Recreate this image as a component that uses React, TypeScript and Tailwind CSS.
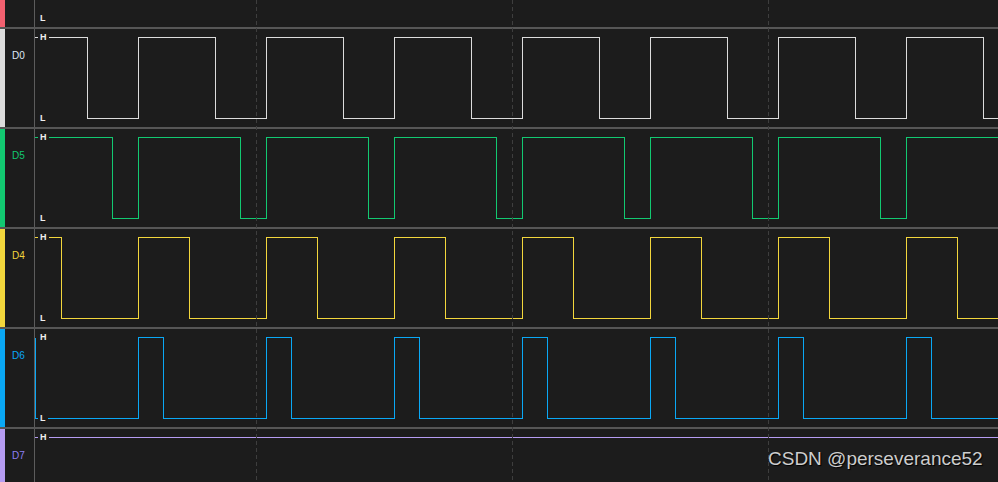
import React from "react";

const SEP = "#565656";

type Sig = {
  name: string;
  color: string;
  label: string;
  start: "H" | "L";
  edges: number[];
  initEdge?: boolean;
};

const H = 8.5;
const L = 89.5;
const W = 998 - 35;

function series(a: number, b: number, max = 998) {
  const out: number[] = [];
  for (let k = 0; k < 10; k++) {
    const x1 = a + 128 * k;
    const x2 = b + 128 * k;
    if (x1 < max) out.push(x1);
    if (x2 < max) out.push(x2);
  }
  return out.sort((p, q) => p - q);
}

function buildPath(sig: Sig) {
  let level = sig.start === "H" ? H : L;
  let d = "";
  if (sig.initEdge) {
    d = `M0.5 ${H} L0.5 ${L}`;
    level = L;
  } else {
    d = `M0 ${level}`;
  }
  for (const px of sig.edges) {
    const x = px - 35 + 0.5;
    d += ` L${x} ${level}`;
    level = level === H ? L : H;
    d += ` L${x} ${level}`;
  }
  d += ` L${W} ${level}`;
  return d;
}

const signals: Sig[] = [
  { name: "D0", color: "#dcdcdc", label: "#dde8f5", start: "H", edges: series(87, 138) },
  { name: "D5", color: "#12c971", label: "#12c971", start: "H", edges: series(112, 138) },
  { name: "D4", color: "#f2d63c", label: "#f2d63c", start: "H", edges: series(61, 138) },
  { name: "D6", color: "#0aa8f5", label: "#0aa8f5", start: "L", edges: series(138, 163), initEdge: true },
  { name: "D7", color: "#b69cf2", label: "#8c7ff2", start: "H", edges: [] },
];

function LevelTag({ text, top }: { text: string; top: string }) {
  return (
    <div
      className={`absolute left-[3px] ${top} flex h-[11px] items-center bg-[#1c1c1c] px-[2px] text-[9px] font-bold leading-none text-[#f0f0f0]`}
      style={{ fontFamily: '"Liberation Sans", Arial, sans-serif' }}
    >
      {text}
    </div>
  );
}

function Row({ sig, showH = true, showL = true }: { sig?: Sig; showH?: boolean; showL?: boolean }) {
  const bar = sig ? sig.color : "#f2606f";
  return (
    <div className="flex h-[98px] shrink-0">
      <div className="w-[5px] shrink-0" style={{ backgroundColor: bar }} />
      <div className="w-[29px] shrink-0 pt-[21px] pl-[7px]">
        {sig && (
          <div
            className="text-[10px] leading-[11px]"
            style={{ color: sig.label, fontFamily: '"Liberation Sans", Arial, sans-serif' }}
          >
            {sig.name}
          </div>
        )}
      </div>
      <div className="w-px shrink-0 bg-[#5c5c5c]" />
      <div className="relative flex-1">
        {sig && (
          <svg className="absolute inset-0" width={W} height={98} shapeRendering="crispEdges">
            <path d={buildPath(sig)} fill="none" stroke={sig.color} strokeWidth={1} />
          </svg>
        )}
        {showH && <LevelTag text="H" top="top-[3px]" />}
        {showL && <LevelTag text="L" top="top-[84px]" />}
      </div>
    </div>
  );
}

function Sep() {
  return <div className="h-[2px] shrink-0" style={{ backgroundColor: SEP }} />;
}

export default function App() {
  return (
    <div className="relative h-[482px] w-[998px] overflow-hidden bg-[#1c1c1c]">
      <div className="flex flex-col">
        <div className="h-[27px] overflow-hidden">
          <div className="-mt-[71px]">
            <Row showH={false} />
          </div>
        </div>
        {signals.map((s) => (
          <React.Fragment key={s.name}>
            <Sep />
            <Row sig={s} showL={s.name !== "D7"} />
          </React.Fragment>
        ))}
      </div>
      {[256, 512, 768].map((x) => (
        <div
          key={x}
          className="pointer-events-none absolute top-0 h-full w-px bg-[repeating-linear-gradient(to_bottom,#3e3e3e_0px,#3e3e3e_4px,transparent_4px,transparent_7px)]"
          style={{ left: x }}
        />
      ))}
      <div
        className="pointer-events-none absolute left-[768px] top-[447px] text-[19px] leading-[24px] text-[#cdcdcd] [text-shadow:1px_1px_1px_#000]"
        style={{ fontFamily: '"Liberation Sans", Arial, sans-serif' }}
      >
        CSDN @perseverance52
      </div>
    </div>
  );
}
